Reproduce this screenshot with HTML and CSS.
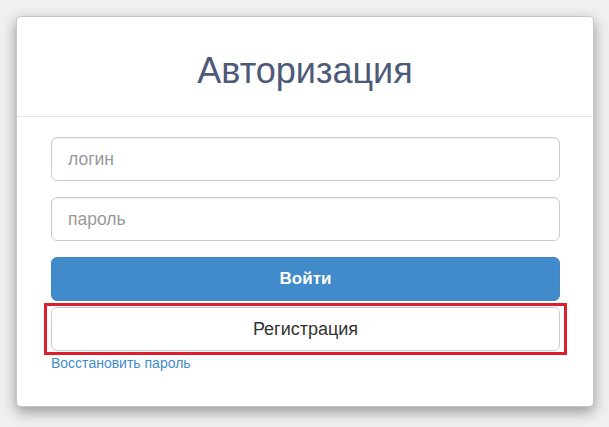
FILE: index.html
```html
<!DOCTYPE html>
<html lang="ru">
<head>
<meta charset="utf-8">
<title>Авторизация</title>
<link rel="stylesheet" href="styles.css">
</head>
<body>
<div class="card">
  <div class="card-header">
    <h1 class="title">Авторизация</h1>
  </div>
  <form class="card-body">
    <input class="field" type="text" placeholder="логин">
    <input class="field" type="password" placeholder="пароль">
    <button class="btn btn-primary" type="button">Войти</button>
    <div class="highlight">
      <button class="btn btn-default" type="button">Регистрация</button>
    </div>
    <a class="link" href="#">Восстановить пароль</a>
  </form>
</div>
</body>
</html>
```

FILE: styles.css
```css
html, body {
  margin: 0;
  padding: 0;
}
body {
  background: #f0f0f0;
  padding: 16px;
  font-family: "Liberation Sans", Arial, sans-serif;
  width: 609px;
  height: 427px;
  box-sizing: border-box;
  overflow: hidden;
}
.card {
  width: 578px;
  height: 391px;
  box-sizing: border-box;
  background: #fff;
  border: 1px solid rgba(0, 0, 0, 0.22);
  border-radius: 5px;
  box-shadow: 0 5px 14px rgba(0, 0, 0, 0.38);
}
.card-header {
  height: 99px;
  border-bottom: 1px solid #e5e5e5;
  display: flex;
  align-items: center;
  justify-content: center;
}
.title {
  margin: 0;
  padding-top: 8px;
  font-size: 36px;
  font-weight: normal;
  color: #4c5a78;
  line-height: 1;
}
.card-body {
  display: flex;
  flex-direction: column;
  padding: 20px 33px 0 34px;
  margin: 0;
}
.field {
  height: 44px;
  box-sizing: border-box;
  border: 1px solid #ccc;
  border-radius: 6px;
  padding: 0 16px;
  font-family: inherit;
  font-size: 17.5px;
  color: #555;
  box-shadow: inset 0 1px 1px rgba(0, 0, 0, 0.075);
  margin-bottom: 16px;
  outline: none;
}
.field::placeholder {
  color: #999;
}
.btn {
  height: 44px;
  box-sizing: border-box;
  border-radius: 6px;
  font-family: inherit;
  font-size: 17px;
  width: 100%;
  cursor: pointer;
}
.btn-primary {
  background: #428bca;
  border: 1px solid #3f86c4;
  color: #fff;
  font-weight: bold;
}
.btn-default {
  background: #fff;
  border: 1px solid #ccc;
  color: #333;
  font-size: 18px;
}
.highlight {
  margin: 2px -7px 0 -7px;
  border: 3px solid #dc1f2b;
  padding: 1px 4px;
}
.link {
  font-size: 14px;
  color: #428bca;
  text-decoration: none;
  margin-top: 0;
  line-height: 16px;
  align-self: flex-start;
}
```
